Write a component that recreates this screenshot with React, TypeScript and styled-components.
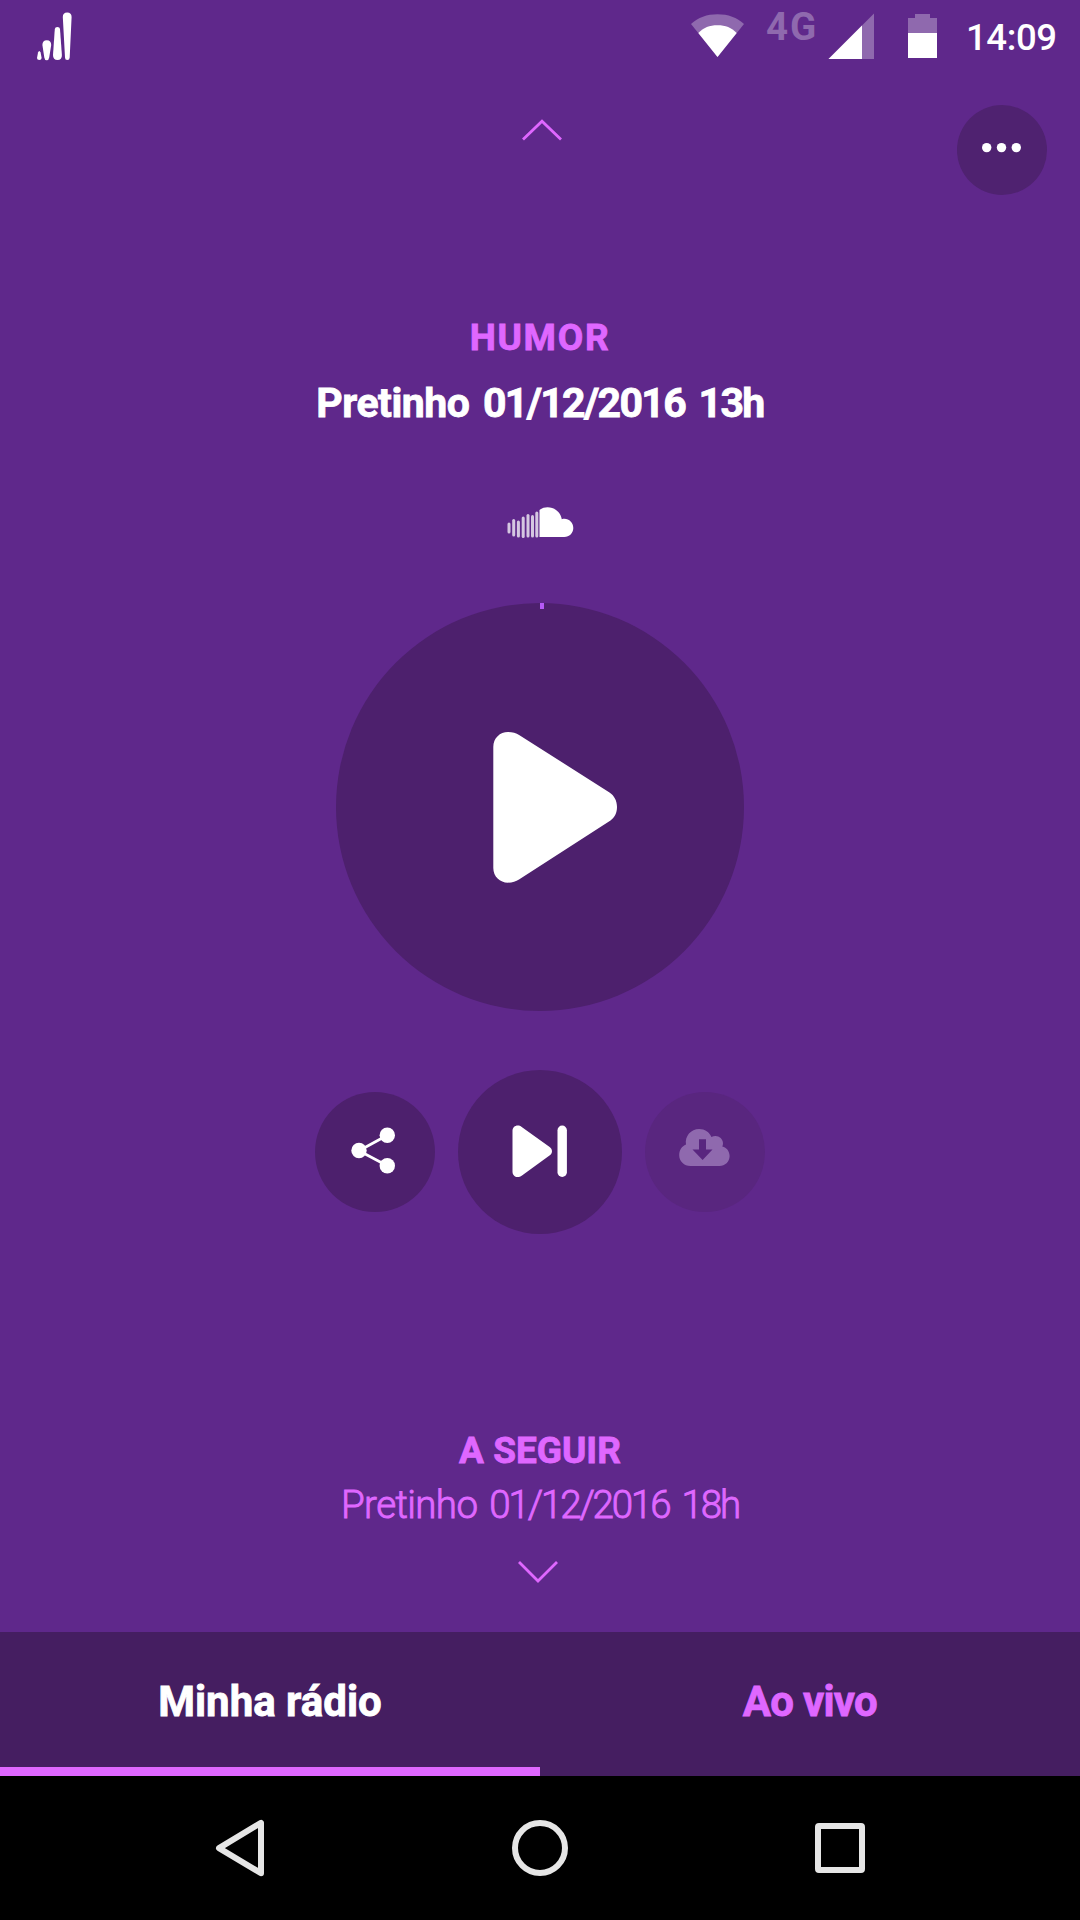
import React from "react";
import styled, { createGlobalStyle } from "styled-components";

const color = {
  bg: "#5f288b",
  disc: "#4d206d",
  menu: "#4f2270",
  tabs: "#451e61",
  pink: "#df67ff",
  faded: "#8f69ae",
  discFaded: "#59267f",
};

const GlobalStyle = createGlobalStyle`
  body { margin: 0; background: ${color.bg}; }
  * { box-sizing: border-box; }
  button { border: 0; padding: 0; background: none; font: inherit; }
  svg { display: block; flex: none; }
`;

const Screen = styled.div`
  width: 1080px;
  height: 1920px;
  display: flex;
  flex-direction: column;
  background: ${color.bg};
  font-family: Roboto, "Liberation Sans", sans-serif;
  overflow: hidden;
`;

const StatusBar = styled.header`
  height: 75px;
  display: flex;
  align-items: flex-start;
  justify-content: space-between;
  padding: 10px 24px 0 35px;
`;

const StatusGroup = styled.div`
  display: flex;
  align-items: flex-start;
`;

const Network = styled.span`
  width: 50px;
  margin: -4px 12px 0 22px;
  font-size: 38.5px;
  font-weight: 700;
  line-height: 42px;
  letter-spacing: 1.8px;
  color: ${color.faded};
`;

const Clock = styled.time`
  width: 90px;
  margin-left: 28px;
  font-size: 36.5px;
  font-weight: 500;
  line-height: 56px;
  letter-spacing: -0.4px;
  color: #fff;
`;

const TopRow = styled.div`
  height: 120px;
  display: grid;
  grid-template-columns: 1fr 45px 1fr;
  padding: 30px 33px 0;
`;

const Chevron = styled.svg<{ $shift: number }>`
  margin-top: 12px;
  transform: translateX(${(p) => p.$shift}px);
`;

const MenuButton = styled.button`
  grid-column: 3;
  justify-self: end;
  width: 90px;
  height: 90px;
  border-radius: 50%;
  background: ${color.menu};
`;

const Player = styled.main`
  flex: 1;
  display: flex;
  flex-direction: column;
  align-items: center;
`;

const Line = styled.p<{
  $size: number;
  $weight: number;
  $height: number;
  $spacing: number;
  $stroke?: number;
  $color?: string;
}>`
  margin: 0;
  height: ${(p) => p.$height}px;
  line-height: ${(p) => p.$height}px;
  font-size: ${(p) => p.$size}px;
  font-weight: ${(p) => p.$weight};
  letter-spacing: ${(p) => p.$spacing}px;
  color: ${(p) => p.$color ?? color.pink};
  -webkit-text-stroke: ${(p) => p.$stroke ?? 0}px currentColor;
  white-space: pre;
`;

const Figures = styled.span<{ $spacing: number; $gap: number }>`
  letter-spacing: ${(p) => p.$spacing}px;
  word-spacing: ${(p) => p.$gap}px;
`;

const NowPlaying = styled.section`
  display: flex;
  flex-direction: column;
  align-items: center;
  gap: 20px;
  padding-top: 123px;
  height: 311px;
`;

const PlayButton = styled.button`
  width: 408px;
  height: 408px;
  margin-top: 65px;
  border-radius: 50%;
  background: ${color.disc};
`;

const Controls = styled.div`
  display: flex;
  align-items: center;
  justify-content: center;
  gap: 23px;
  height: 164px;
  margin-top: 59px;
`;

const RoundButton = styled.button<{ $size: number; $faded?: boolean }>`
  width: ${(p) => p.$size}px;
  height: ${(p) => p.$size}px;
  border-radius: 50%;
  background: ${(p) => (p.$faded ? color.discFaded : color.disc)};
`;

const UpNext = styled.section`
  display: flex;
  flex-direction: column;
  align-items: center;
  gap: 14px;
  margin-top: 197px;
`;

const UpNextLines = styled.div`
  display: flex;
  flex-direction: column;
  align-items: center;
  gap: 13px;
  padding-bottom: 7px;
`;

const Tabs = styled.nav`
  height: 144px;
  display: grid;
  grid-template-columns: 1fr 1fr;
  background: ${color.tabs};
`;

const Tab = styled.button<{ $active?: boolean }>`
  display: flex;
  justify-content: center;
  padding-top: 45px;
  border-bottom: 9px solid ${(p) => (p.$active ? color.pink : "transparent")};
`;

const SystemNav = styled.footer`
  height: 144px;
  display: flex;
  justify-content: space-between;
  align-items: center;
  padding: 0 210px;
  background: #000;
`;

const BarsIcon = () => (
  <svg width="40" height="52" viewBox="35 10 40 52" fill="#fff">
    <path d="M38 52.5Q39.3 49.5 40.6 52.5L41.6 58Q41.6 60 39.3 60T37 58Z" />
    <path d="M42.4 45Q42.4 40.3 46.8 40.3T51.2 45L49.2 57.5Q48.8 60.2 46.7 60.2T44.3 57.5Z" />
    <path d="M54.8 29Q55 27 57.4 27T60 29L61.9 55Q62 60 57.5 60T53 55Z" />
    <path d="M62.8 17Q62.8 12.5 67.2 12.5T71.6 17L69.7 57.5Q69.6 60 67.3 60T65 57.5Z" />
  </svg>
);

const WifiIcon = () => (
  <svg width="54" height="50" viewBox="690 10 54 50">
    <path d="M717.5 57L691 24C698 17.5 707 14.3 717.5 14.3S737 17.5 744 24Z" fill={color.faded} />
    <path d="M717.5 57L698.3 33C703.5 27.6 709.5 25.2 717.5 25.2S731.5 27.6 736.7 33Z" fill="#fff" />
  </svg>
);

const CellIcon = () => (
  <svg width="47" height="50" viewBox="827 10 47 50">
    <path d="M827.5 59L873 13.5V59Z" fill={color.faded} />
    <path d="M827.5 59L861 25.5V59Z" fill="#fff" />
  </svg>
);

const Battery = styled.svg`
  margin-left: 33px;
`;

const BatteryIcon = () => (
  <Battery width="30" height="50" viewBox="907 10 30 50">
    <path d="M914 14h15v4h7v15h-29V18h7z" fill={color.faded} />
    <path d="M907 33h29v25h-29z" fill="#fff" />
  </Battery>
);

const ChevronIcon = ({ down = false }: { down?: boolean }) => (
  <Chevron $shift={down ? -1.5 : 1.5} width="45" height="26" viewBox="0 0 45 26">
    <path
      d={down ? "M3.5 3L22.5 22L41.5 3" : "M3.5 22.5L22.5 4.2L41.5 22.5"}
      fill="none"
      stroke={color.pink}
      strokeWidth="2.8"
    />
  </Chevron>
);

const bars = [
  [509, 524, 532], [513.7, 520.5, 535], [518.4, 522, 536], [523.2, 518, 536.5],
  [528, 515.5, 536], [532.5, 516.5, 536], [536.8, 513, 536],
];

const SoundCloudIcon = () => (
  <svg width="68" height="32" viewBox="506 506 68 32">
    {bars.map(([x, top, bottom]) => (
      <path key={x} d={`M${x} ${top}V${bottom}`} stroke="#fff" strokeOpacity="0.74" strokeWidth="3" strokeLinecap="round" />
    ))}
    <path d="M539.5 510C542 508 545 507.3 547.5 507.3C555 507.3 560.8 512.5 561.8 519.2C567.8 517.5 573.3 522 573.3 528C573.3 533 569.3 537 564.3 537H539.5Z" fill="#fff" />
  </svg>
);

const PlayIcon = () => (
  <svg width="408" height="408" viewBox="336 603 408 408">
    <path d="M540 603h4v6h-4z" fill="#b55af6" />
    <path d="M493.3 747C493.3 738 500 732 508 732C512.5 732 516 733 519.5 735.2L609.5 792.5C614 795.5 617 800.5 617 807C617 813 614.5 817.7 610.5 820.4L519 879.5C516 881.5 512.5 882.7 508 882.7C500 882.7 493.3 876.5 493.3 868Z" fill="#fff" />
  </svg>
);

const ShareIcon = () => (
  <svg width="120" height="120" viewBox="315 1092 120 120" fill="#fff">
    <path d="M387.3 1135.3L359 1150.7L387.3 1165.7" fill="none" stroke="#fff" strokeWidth="2.8" />
    <circle cx="359" cy="1150.5" r="7.7" />
    <circle cx="387.3" cy="1135.3" r="7.7" />
    <circle cx="387.3" cy="1165.7" r="7.7" />
  </svg>
);

const NextIcon = () => (
  <svg width="164" height="164" viewBox="458 1070 164 164" fill="#fff">
    <path d="M512.5 1131C512.5 1127.7 514.8 1125.6 517.7 1125.6C519.2 1125.6 520.5 1126 521.7 1127L549.3 1146.7C551 1148 552 1149.3 552 1151.2C552 1153 551 1154.5 549.5 1155.6L522 1175.4C520.5 1176.5 519 1177 517.6 1177C514.8 1177 512.5 1174.8 512.5 1171.7Z" />
    <rect x="557.5" y="1125.6" width="9.4" height="51.4" rx="4.7" />
  </svg>
);

const CloudDownloadIcon = () => (
  <svg width="120" height="120" viewBox="645 1092 120 120">
    <path d="M690.5 1166C684 1166 679.2 1161 679.2 1155.2C679.2 1150.2 681.8 1146.4 686 1144.6C684.6 1136 691 1129 699.2 1129C704.8 1129 709.4 1132 711.4 1137C716.5 1134 723 1137.4 723 1143.3C723 1144.4 722.8 1145.5 722.3 1146.6C726.7 1147.6 729.6 1151.4 729.6 1156C729.6 1161.7 725 1166 719.5 1166Z" fill={color.faded} />
    <path d="M699 1139.3h7v10.2h6.5L702.6 1160L692.5 1149.5H699Z" fill={color.discFaded} />
  </svg>
);

const BackIcon = () => (
  <svg width="60" height="60" viewBox="210 1818 60 60">
    <path d="M219 1848.1L261 1822.8V1873.2Z" fill="none" stroke="#e6e6e6" strokeWidth="6" strokeLinejoin="round" />
  </svg>
);

const HomeIcon = () => (
  <svg width="60" height="60" viewBox="510 1818 60 60">
    <circle cx="540" cy="1848" r="25" fill="none" stroke="#e6e6e6" strokeWidth="6" />
  </svg>
);

const RecentsIcon = () => (
  <svg width="60" height="60" viewBox="810 1818 60 60">
    <rect x="818" y="1826" width="44" height="44" rx="1" fill="none" stroke="#e6e6e6" strokeWidth="6" />
  </svg>
);

export default function App() {
  return (
    <Screen>
      <GlobalStyle />
      <StatusBar>
        <BarsIcon />
        <StatusGroup>
          <WifiIcon />
          <Network>4G</Network>
          <CellIcon />
          <BatteryIcon />
          <Clock>14:09</Clock>
        </StatusGroup>
      </StatusBar>

      <TopRow>
        <span />
        <ChevronIcon />
        <MenuButton aria-label="Menu">
          <svg width="90" height="90" viewBox="957 105 90 90" fill="#fff">
            <circle cx="986.7" cy="147.6" r="4.7" />
            <circle cx="1001.5" cy="147.6" r="4.7" />
            <circle cx="1016.3" cy="147.6" r="4.7" />
          </svg>
        </MenuButton>
      </TopRow>

      <Player>
        <NowPlaying>
          <Line $size={37} $weight={700} $height={40} $spacing={1.7} $stroke={0.8}>HUMOR</Line>
          <Line $size={41} $weight={700} $height={50} $spacing={-0.5} $stroke={0.8} $color="#fff">
            Pretinho<Figures $spacing={-1.65} $gap={5}> 01/12/2016 13h</Figures>
          </Line>
        </NowPlaying>
        <SoundCloudIcon />
        <PlayButton aria-label="Tocar">
          <PlayIcon />
        </PlayButton>
        <Controls>
          <RoundButton $size={120} aria-label="Compartilhar"><ShareIcon /></RoundButton>
          <RoundButton $size={164} aria-label="Próxima"><NextIcon /></RoundButton>
          <RoundButton $size={120} $faded aria-label="Baixar"><CloudDownloadIcon /></RoundButton>
        </Controls>
        <UpNext>
          <UpNextLines>
            <Line $size={37} $weight={700} $height={40} $spacing={0} $stroke={0.8}>A SEGUIR</Line>
            <Line $size={38.5} $weight={300} $height={42} $spacing={-0.6} $stroke={0.9}>
              Pretinho<Figures $spacing={-2.1} $gap={4.5}> 01/12/2016 18h</Figures>
            </Line>
          </UpNextLines>
          <ChevronIcon down />
        </UpNext>
      </Player>

      <Tabs>
        <Tab $active>
          <Line as="span" $size={42} $weight={700} $height={50} $spacing={0} $stroke={0.8} $color="#fff">Minha rádio</Line>
        </Tab>
        <Tab>
          <Line as="span" $size={42} $weight={700} $height={50} $spacing={-0.7} $stroke={0.8}>Ao vivo</Line>
        </Tab>
      </Tabs>

      <SystemNav>
        <BackIcon />
        <HomeIcon />
        <RecentsIcon />
      </SystemNav>
    </Screen>
  );
}
